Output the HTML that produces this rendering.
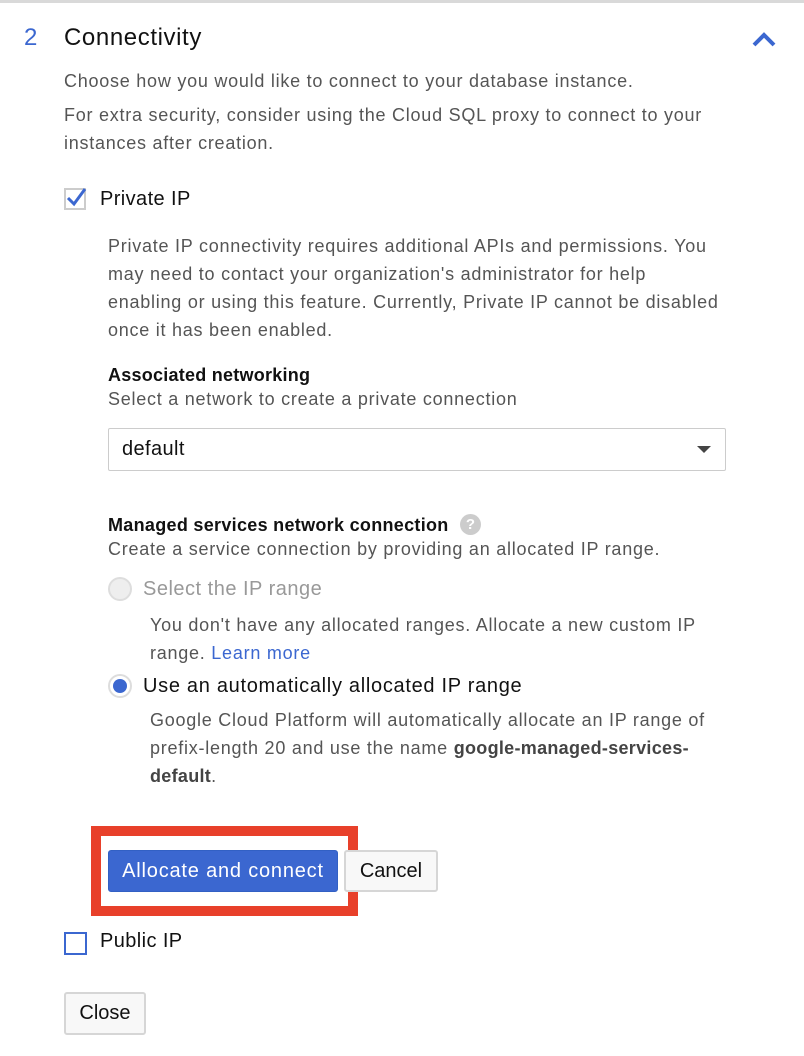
<!DOCTYPE html>
<html><head><meta charset="utf-8"><style>
*{margin:0;padding:0;box-sizing:border-box}
body{width:804px;height:1056px;background:#fff;font-family:"Liberation Sans",Arial,sans-serif;position:relative;overflow:hidden;color:#222}
.a{position:absolute;white-space:nowrap;line-height:1}
.g{color:#555;font-size:18px;letter-spacing:0.75px}
.btn{position:absolute;border:2px solid #d6d6d6;border-radius:3px;background:#f8f8f8;font-size:20px;color:#111;display:flex;align-items:center;justify-content:center}
</style></head><body>
<div style="position:absolute;left:0;top:0;width:804px;height:3px;background:#d9d9d9"></div>
<div class="a" style="left:24px;top:26px;font-size:24px;color:#3b67d0">2</div>
<div class="a" style="left:64px;top:26px;font-size:24px;color:#111;letter-spacing:0.6px">Connectivity</div>
<svg class="a" style="left:751px;top:30px" width="26" height="18"><path d="M3 15 L13 5 L23 15" stroke="#3b67d0" stroke-width="4" fill="none"/></svg>
<div class="a g" style="left:64px;top:72px">Choose how you would like to connect to your database instance.</div>
<div class="a g" style="left:64px;top:106px">For extra security, consider using the Cloud SQL proxy to connect to your</div>
<div class="a g" style="left:64px;top:134px">instances after creation.</div>
<div style="position:absolute;left:64px;top:188px;width:22px;height:22px;border:2px solid #ccc;background:#fff"></div>
<svg class="a" style="left:64px;top:186px" width="24" height="22"><path d="M4 12 L10 18 L21 3" stroke="#3b67d0" stroke-width="3" fill="none"/></svg>
<div class="a" style="left:100px;top:189px;font-size:20px;color:#111;letter-spacing:0.4px">Private IP</div>
<div class="a g" style="left:108px;top:237px">Private IP connectivity requires additional APIs and permissions. You</div>
<div class="a g" style="left:108px;top:265px">may need to contact your organization's administrator for help</div>
<div class="a g" style="left:108px;top:293px">enabling or using this feature. Currently, Private IP cannot be disabled</div>
<div class="a g" style="left:108px;top:321px">once it has been enabled.</div>
<div class="a" style="left:108px;top:366px;font-size:18px;font-weight:bold;color:#111;letter-spacing:0.25px">Associated networking</div>
<div class="a g" style="left:108px;top:390px">Select a network to create a private connection</div>
<div style="position:absolute;left:108px;top:428px;width:618px;height:43px;border:1px solid #ccc;border-radius:2px"></div>
<div class="a" style="left:122px;top:439px;font-size:20px;color:#111;letter-spacing:0.4px">default</div>
<svg class="a" style="left:696px;top:444px" width="16" height="10"><path d="M1 2 L15 2 L8 9Z" fill="#444"/></svg>
<div class="a" style="left:108px;top:516px;font-size:18px;font-weight:bold;color:#111;letter-spacing:0.3px">Managed services network connection</div>
<div style="position:absolute;left:460px;top:514px;width:21px;height:21px;border-radius:50%;background:#ccc;color:#fff;font-size:15px;font-weight:bold;text-align:center;line-height:21px">?</div>
<div class="a g" style="left:108px;top:540px">Create a service connection by providing an allocated IP range.</div>
<div style="position:absolute;left:108px;top:577px;width:24px;height:24px;border-radius:50%;border:2px solid #ddd;background:#eee"></div>
<div class="a" style="left:143px;top:579px;font-size:20px;color:#999;letter-spacing:0.5px">Select the IP range</div>
<div class="a g" style="left:150px;top:616px">You don't have any allocated ranges. Allocate a new custom IP</div>
<div class="a g" style="left:150px;top:644px">range. <span style="color:#3b67d0">Learn more</span></div>
<div style="position:absolute;left:108px;top:674px;width:24px;height:24px;border-radius:50%;border:2px solid #ddd;background:#fff"></div>
<div style="position:absolute;left:113px;top:679px;width:14px;height:14px;border-radius:50%;background:#3b67d0"></div>
<div class="a" style="left:143px;top:676px;font-size:20px;color:#111;letter-spacing:0.7px">Use an automatically allocated IP range</div>
<div class="a g" style="left:150px;top:711px">Google Cloud Platform will automatically allocate an IP range of</div>
<div class="a g" style="left:150px;top:739px">prefix-length 20 and use the name <b style="color:#444;letter-spacing:0.3px">google-managed-services-</b></div>
<div class="a g" style="left:150px;top:767px"><b style="color:#444;letter-spacing:0.3px">default</b>.</div>
<div style="position:absolute;left:91px;top:826px;width:267px;height:90px;border:10px solid #e8402a"></div>
<div style="position:absolute;left:108px;top:850px;width:230px;height:42px;background:#3b67d0;border-radius:3px;border:1px solid #3260c4;color:#fff;font-size:20px;letter-spacing:0.8px;display:flex;align-items:center;justify-content:center">Allocate and connect</div>
<div class="btn" style="left:344px;top:850px;width:94px;height:42px">Cancel</div>
<div style="position:absolute;left:64px;top:932px;width:23px;height:23px;border:2px solid #3b67d0"></div>
<div class="a" style="left:100px;top:931px;font-size:20px;color:#111;letter-spacing:0.4px">Public IP</div>
<div class="btn" style="left:64px;top:992px;width:82px;height:43px">Close</div>
</body></html>
